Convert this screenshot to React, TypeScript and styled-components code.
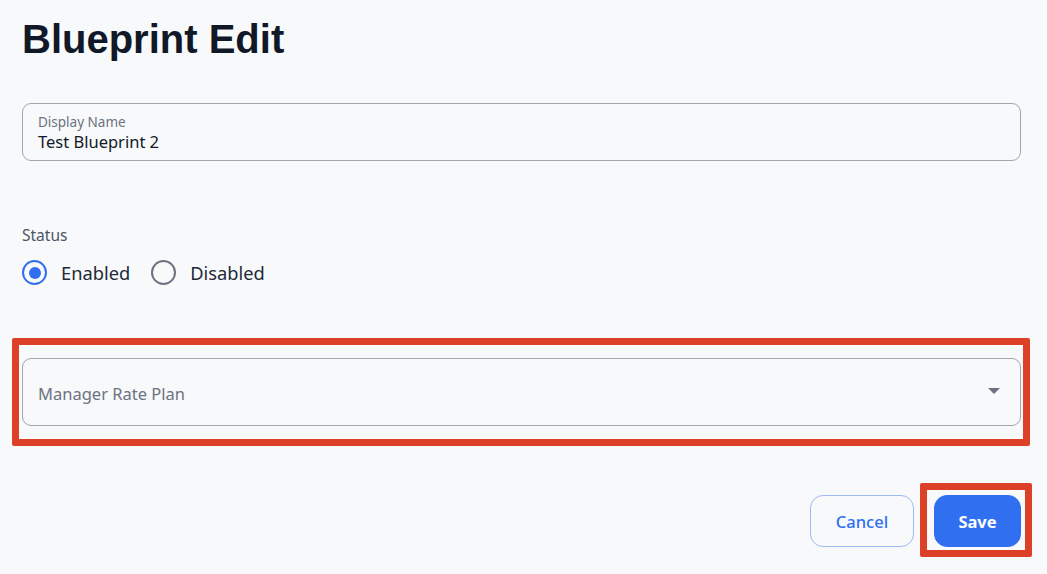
import * as React from 'react';
import styled, {createGlobalStyle} from 'styled-components';

const GlobalStyle = createGlobalStyle`
  html, body {
    margin: 0;
    padding: 0;
    background: #f8f9fb;
  }
  body {
    font-family: "Noto Sans", "Open Sans", sans-serif;
    color: #111827;
  }
`;

const Page = styled.div`
  width: 1047px;
  height: 574px;
  box-sizing: border-box;
  padding: 14px 26px 0 22px;
  display: flex;
  flex-direction: column;
`;

const Title = styled.h1`
  margin: 0;
  font-family: "Liberation Sans", Arial, sans-serif;
  font-size: 40px;
  font-weight: 700;
  line-height: 50px;
  color: #111827;
`;

const Field = styled.div`
  margin-top: 39px;
  height: 58px;
  box-sizing: border-box;
  border: 1px solid #a3a7ad;
  border-radius: 9px;
  padding: 9px 15px 0;
  display: flex;
  flex-direction: column;
`;

const FieldLabel = styled.span`
  font-size: 13.5px;
  line-height: 18px;
  color: #6b7280;
`;

const FieldValue = styled.span`
  font-size: 16.5px;
  line-height: 22px;
  color: #111827;
`;

const Section = styled.div`
  margin-top: 64px;
  display: flex;
  flex-direction: column;
`;

const SectionLabel = styled.span`
  font-size: 15.5px;
  line-height: 20px;
  color: #4b5563;
`;

const RadioRow = styled.div`
  margin-top: 15px;
  display: flex;
  align-items: center;
  gap: 21px;
`;

const RadioOption = styled.label`
  display: flex;
  align-items: center;
  gap: 14px;
  font-size: 18.3px;
  line-height: 24px;
  color: #1f2937;
`;

const RadioCircle = styled.span<{$checked?: boolean}>`
  width: 25px;
  height: 25px;
  box-sizing: border-box;
  border-radius: 50%;
  border: 2.5px solid ${p => (p.$checked ? '#2f6ff0' : '#6b7280')};
  display: flex;
  align-items: center;
  justify-content: center;
  &::after {
    content: '';
    display: ${p => (p.$checked ? 'block' : 'none')};
    width: 12px;
    height: 12px;
    border-radius: 50%;
    background: #2f6ff0;
  }
`;

const Highlight = styled.div`
  position: relative;
  &::after {
    content: '';
    position: absolute;
    pointer-events: none;
    border: 7px solid #dc4128;
    border-radius: 2px;
  }
`;

const SelectWrap = styled(Highlight)`
  margin-top: 73px;
  &::after {
    left: -10px;
    right: -9px;
    top: -20px;
    bottom: -20px;
  }
`;

const Select = styled.div`
  height: 68px;
  box-sizing: border-box;
  border: 1px solid #a3a7ad;
  border-radius: 9px;
  padding: 0 20px 0 15px;
  display: flex;
  align-items: center;
  justify-content: space-between;
`;

const SelectPlaceholder = styled.span`
  font-size: 16.5px;
  color: #6b7280;
  padding-top: 3px;
`;

const Caret = styled.span`
  width: 0;
  height: 0;
  border-left: 6px solid transparent;
  border-right: 6px solid transparent;
  border-top: 6px solid #6b7280;
  margin-top: -2px;
`;

const Actions = styled.div`
  margin-top: 69px;
  display: flex;
  justify-content: flex-end;
  gap: 20px;
`;

const Button = styled.button<{$primary?: boolean}>`
  height: 52px;
  box-sizing: border-box;
  border-radius: 13px;
  font-family: "Noto Sans", "Open Sans", sans-serif;
  font-size: 16.5px;
  font-weight: ${p => (p.$primary ? 700 : 500)};
  padding: 0;
  cursor: pointer;
  border: 1px solid ${p => (p.$primary ? '#2f6ff0' : '#9dbaf2')};
  background: ${p => (p.$primary ? '#2f6ff0' : 'transparent')};
  color: ${p => (p.$primary ? '#ffffff' : '#2f6ff0')};
`;

const CancelButton = styled(Button)`
  width: 104px;
`;

const SaveButton = styled(Button)`
  width: 87px;
`;

const SaveWrap = styled(Highlight)`
  display: flex;
  &::after {
    left: -14px;
    right: -11px;
    top: -12px;
    bottom: -10px;
  }
`;

const App = () => {
  return (
    <>
      <GlobalStyle />
      <Page>
        <Title>Blueprint Edit</Title>
        <Field>
          <FieldLabel>Display Name</FieldLabel>
          <FieldValue>Test Blueprint 2</FieldValue>
        </Field>
        <Section>
          <SectionLabel>Status</SectionLabel>
          <RadioRow>
            <RadioOption>
              <RadioCircle $checked />
              Enabled
            </RadioOption>
            <RadioOption>
              <RadioCircle />
              Disabled
            </RadioOption>
          </RadioRow>
        </Section>
        <SelectWrap>
          <Select>
            <SelectPlaceholder>Manager Rate Plan</SelectPlaceholder>
            <Caret />
          </Select>
        </SelectWrap>
        <Actions>
          <CancelButton>Cancel</CancelButton>
          <SaveWrap>
            <SaveButton $primary>Save</SaveButton>
          </SaveWrap>
        </Actions>
      </Page>
    </>
  );
};

export default App;
